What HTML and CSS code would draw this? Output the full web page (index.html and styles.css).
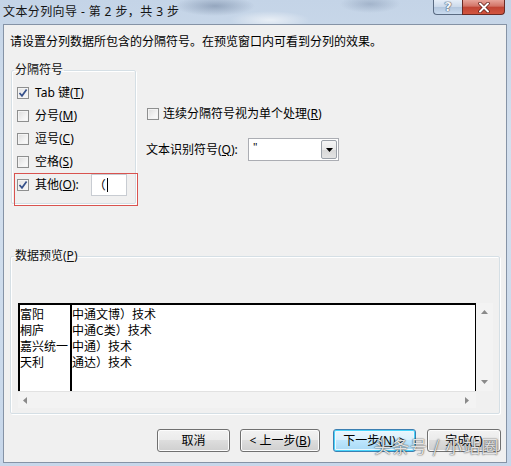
FILE: index.html
```html
<!DOCTYPE html>
<html lang="zh-CN">
<head>
<meta charset="utf-8">
<title>文本分列向导</title>
<link rel="stylesheet" href="styles.css">
</head>
<body>
<div class="window">
  <div class="titlebar">
    <span class="title">文本分列向导 - 第 2 步，共 3 步</span>
    <div class="caption">
      <span class="cap help">?</span>
      <span class="cap close"><svg width="14" height="11" viewBox="0 0 14 11"><path d="M3 1.5 L11 9.5 M11 1.5 L3 9.5" stroke="#5b1a14" stroke-width="3.4" stroke-linecap="round"/><path d="M3 1.5 L11 9.5 M11 1.5 L3 9.5" stroke="#ffffff" stroke-width="2" stroke-linecap="round"/></svg></span>
    </div>
  </div>
  <div class="client">
    <p class="intro">请设置分列数据所包含的分隔符号。在预览窗口内可看到分列的效果。</p>
    <div class="options">
      <fieldset class="group delims">
        <legend>分隔符号</legend>
        <div class="check"><span class="box on"><svg width="10" height="10" viewBox="0 0 10 10"><path d="M1.5 5 L4 7.8 L8.6 1.6" fill="none" stroke="#35508a" stroke-width="1.7"/></svg></span>Tab 键(<u>T</u>)</div>
        <div class="check"><span class="box"></span>分号(<u>M</u>)</div>
        <div class="check"><span class="box"></span>逗号(<u>C</u>)</div>
        <div class="check"><span class="box"></span>空格(<u>S</u>)</div>
        <div class="check other"><span class="box on"><svg width="10" height="10" viewBox="0 0 10 10"><path d="M1.5 5 L4 7.8 L8.6 1.6" fill="none" stroke="#35508a" stroke-width="1.7"/></svg></span>其他(<u>O</u>):<span class="textbox">（<i class="caret"></i></span></div>
      </fieldset>
      <div class="right-opts">
        <div class="check"><span class="box"></span>连续分隔符号视为单个处理(<u>R</u>)</div>
        <div class="qualifier">
          <span class="qlabel">文本识别符号(<u>Q</u>):</span>
          <div class="select"><span class="val">"</span><span class="drop"><svg width="7" height="4" viewBox="0 0 7 4"><path d="M0 0 H7 L3.5 4 Z" fill="#000"/></svg></span></div>
        </div>
      </div>
      <div class="mark"></div>
    </div>
    <fieldset class="group preview">
      <legend>数据预览(<u>P</u>)</legend>
      <div class="grid-wrap">
        <div class="sheet">
          <div class="col c1"><div>富阳</div><div>桐庐</div><div>嘉兴统一</div><div>天利</div></div>
          <div class="col c2"><div>中通文博）技术</div><div>中通C类）技术</div><div>中通）技术</div><div>通达）技术</div></div>
        </div>
        <div class="vscroll">
          <svg width="7" height="4" viewBox="0 0 7 4"><path d="M0 4 L3.5 0 L7 4 Z" fill="#8a8a8a"/></svg>
          <svg width="7" height="4" viewBox="0 0 7 4"><path d="M0 0 H7 L3.5 4 Z" fill="#8a8a8a"/></svg>
        </div>
        <div class="hscroll">
          <svg width="4" height="7" viewBox="0 0 4 7"><path d="M4 0 V7 L0 3.5 Z" fill="#8a8a8a"/></svg>
          <svg width="4" height="7" viewBox="0 0 4 7"><path d="M0 0 V7 L4 3.5 Z" fill="#8a8a8a"/></svg>
        </div>
        <div class="corner"></div>
      </div>
    </fieldset>
    <div class="buttons">
      <button class="btn b1">取消</button>
      <button class="btn b2">&lt; 上一步(<u>B</u>)</button>
      <button class="btn b3 focus">下一步(<u>N</u>) &gt;</button>
      <button class="btn b4">完成(<u>F</u>)</button>
    </div>
  </div>
  <div class="watermark">头条号 / 小站圈</div>
</div>
</body>
</html>
```
FILE: styles.css
```css
* { box-sizing: border-box; }
html, body { margin: 0; padding: 0; }
body {
  width: 511px;
  height: 466px;
  overflow: hidden;
  font-family: "Noto Sans", "Noto Sans CJK SC", sans-serif;
  font-size: 12px;
  color: #000;
  background: #c9d8ea;
}
.window {
  position: relative;
  width: 511px;
  height: 466px;
  display: flex;
  flex-direction: column;
  padding: 0 4px 3px 3px;
  background:
    radial-gradient(ellipse 40px 10px at 215px 6px, rgba(90,110,140,0.45), transparent),
    radial-gradient(ellipse 30px 9px at 370px 4px, rgba(100,120,150,0.35), transparent),
    radial-gradient(ellipse 40px 9px at 270px 20px, rgba(255,255,255,0.6), transparent),
    linear-gradient(180deg, #c4d4e7 0%, #d4e0ee 30%, #c7d7ea 100%);
}
.titlebar {
  height: 24px;
  display: flex;
  align-items: flex-start;
  flex: none;
}
.title {
  margin-top: 4px;
  line-height: 15px;
  font-size: 12px;
  letter-spacing: 0.4px;
  color: #141414;
  font-family: "Noto Sans", "Noto Sans CJK SC", sans-serif;
}
.caption {
  margin-left: auto;
  margin-right: 2px;
  display: flex;
}
.cap {
  height: 15px;
  display: flex;
  align-items: center;
  justify-content: center;
  border: 1px solid #5a6b82;
  border-top: none;
}
.help {
  width: 29px;
  border-radius: 0 0 0 4px;
  border-right: none;
  background: linear-gradient(180deg, #e6eef8 0%, #cbd9ea 50%, #b3c6dd 51%, #c9dbef 100%);
  color: #f4f6fa;
  font-size: 13px;
  font-weight: bold;
  font-family: "DejaVu Sans", sans-serif;
  text-shadow: 0 0 1px #44546a, 0 0 1px #44546a, 0 0 1px #44546a;
  line-height: 14px;
}
.close {
  width: 43px;
  border-radius: 0 0 4px 0;
  border-color: #6a2a24;
  background: linear-gradient(180deg, #e7a49a 0%, #d27366 45%, #c04434 50%, #d2553f 100%);
}
.client {
  flex: 1;
  border: 1px solid #8593a6;
  background: #f0f0f0;
  display: flex;
  flex-direction: column;
}
.intro {
  margin: 0;
  padding: 9px 0 0 6px;
  line-height: 16px;
  font-size: 12px;
}
.options {
  position: relative;
  margin-top: 13px;
  display: flex;
  align-items: flex-start;
}
.group {
  margin: 0;
  border: 1px solid #d5dfe5;
  box-shadow: inset 1px 1px 0 #fff, 1px 1px 0 #fff;
  border-radius: 2px;
}
.group legend {
  padding: 0 1px;
  line-height: 14px;
  font-size: 12px;
  color: #111;
}
.delims {
  margin-left: 7px;
  width: 125px;
  padding: 4px 0 6px 5px;
}
.delims legend { margin-left: -3px; }
.check {
  display: flex;
  align-items: center;
  height: 23px;
  line-height: 14px;
  white-space: nowrap;
}
.check.other { height: 24px; }
.box {
  width: 12px;
  height: 12px;
  margin-right: 6px;
  flex: none;
  border: 1px solid #8e8f8f;
  background: linear-gradient(135deg, #dcdcdc 0%, #f3f3f3 60%, #fdfdfd 100%);
  box-shadow: inset 0 0 0 1px #f4f4f4;
  display: flex;
  align-items: center;
  justify-content: center;
}
.box.on { background: linear-gradient(135deg, #e4e4e4 0%, #f7f7f7 100%); }
.box svg { display: block; }
.textbox {
  margin-left: 12px;
  width: 36px;
  height: 22px;
  background: #fff;
  border: 1px solid #c8ccd2;
  display: flex;
  align-items: center;
  padding-left: 2px;
  font-family: "Noto Sans CJK SC", sans-serif;
  font-size: 12px;
}
.caret {
  display: inline-block;
  width: 1px;
  height: 14px;
  background: #000;
  margin-left: 1px;
}
.right-opts {
  margin-left: 10px;
  padding-top: 43px;
}
.right-opts .check { height: 16px; margin-left: 1px; }
.right-opts .box { margin-right: 4px; }
.qualifier {
  margin-top: 16px;
  display: flex;
  align-items: center;
  line-height: 14px;
}
.qlabel { width: 102px; }
.select {
  width: 91px;
  height: 23px;
  background: #fff;
  border: 1px solid #abadb3;
  display: flex;
}
.val {
  flex: 1;
  padding: 2px 0 0 4px;
  font-size: 11px;
  line-height: 12px;
}
.drop {
  width: 16px;
  margin: 1px 1px 1px 0;
  border: 1px solid #9aa0a8;
  border-radius: 2px;
  background: linear-gradient(180deg, #f6f6f6 0%, #e9e9e9 50%, #d8d8d8 51%, #e3e3e3 100%);
  display: flex;
  align-items: center;
  justify-content: center;
}
.mark {
  position: absolute;
  left: 10px;
  top: 110px;
  width: 124px;
  height: 33px;
  border: 1px solid #d9534f;
}
.preview {
  margin: 45px 6px 0 6px;
  padding: 40px 6px 5px 7px;
}
.preview legend { margin-left: -4px; }
.grid-wrap {
  height: 105px;
  display: grid;
  grid-template-columns: 1fr 17px;
  grid-template-rows: 1fr 17px;
}
.sheet {
  background: #fff;
  border-top: 2px solid #000;
  border-left: 2px solid #000;
  border-right: 1px solid #000;
  display: flex;
  font-family: "Noto Sans CJK SC", sans-serif;
  font-size: 12px;
  line-height: 16px;
}
.col { padding-top: 1px; }
.c1 { width: 52px; border-right: 2px solid #000; white-space: nowrap; overflow: hidden; }
.c2 { white-space: nowrap; }
.vscroll {
  display: flex;
  flex-direction: column;
  justify-content: space-between;
  align-items: center;
  padding: 7px 0 7px 0;
  background: #f3f3f3;
}
.vscroll svg, .hscroll svg { display: block; }
.hscroll {
  display: flex;
  justify-content: space-between;
  align-items: center;
  padding: 0 7px 0 5px;
  background: #f3f3f3;
  border-top: 1px solid #e2e2e2;
}
.corner { background: #f0f0f0; }
.buttons {
  margin-top: 15px;
  display: flex;
  justify-content: flex-end;
  padding-right: 5px;
}
.btn {
  height: 23px;
  margin: 0;
  padding: 0;
  border: 1px solid #707070;
  border-radius: 3px;
  background: linear-gradient(180deg, #f2f2f2 0%, #ebebeb 48%, #dddddd 50%, #cfcfcf 100%);
  box-shadow: inset 0 0 0 1px #fcfcfc;
  font-family: "Noto Sans", "Noto Sans CJK SC", sans-serif;
  font-size: 12px;
  line-height: 14px;
  color: #000;
}
.b1 { width: 73px; }
.b2 { width: 80px; margin-left: 10px; }
.b3 { width: 83px; margin-left: 13px; }
.b4 { width: 74px; margin-left: 11px; }
.btn.focus {
  border-color: #3c7fb1;
  box-shadow: inset 0 0 0 1px #48d4fb, inset 0 0 0 2px #ecf7fd;
  background: linear-gradient(180deg, #eaf6fd 0%, #d9f0fc 48%, #bee6fd 50%, #a7d9f5 100%);
}
.watermark {
  position: absolute;
  left: 374px;
  top: 436px;
  font-family: "Noto Sans CJK SC", sans-serif;
  font-size: 17px;
  line-height: 20px;
  letter-spacing: 1px;
  color: rgba(255,255,255,0.85);
  text-shadow: 0 0 1px rgba(50,50,50,0.9), 0 0 2px rgba(50,50,50,0.6);
  white-space: nowrap;
}
```
